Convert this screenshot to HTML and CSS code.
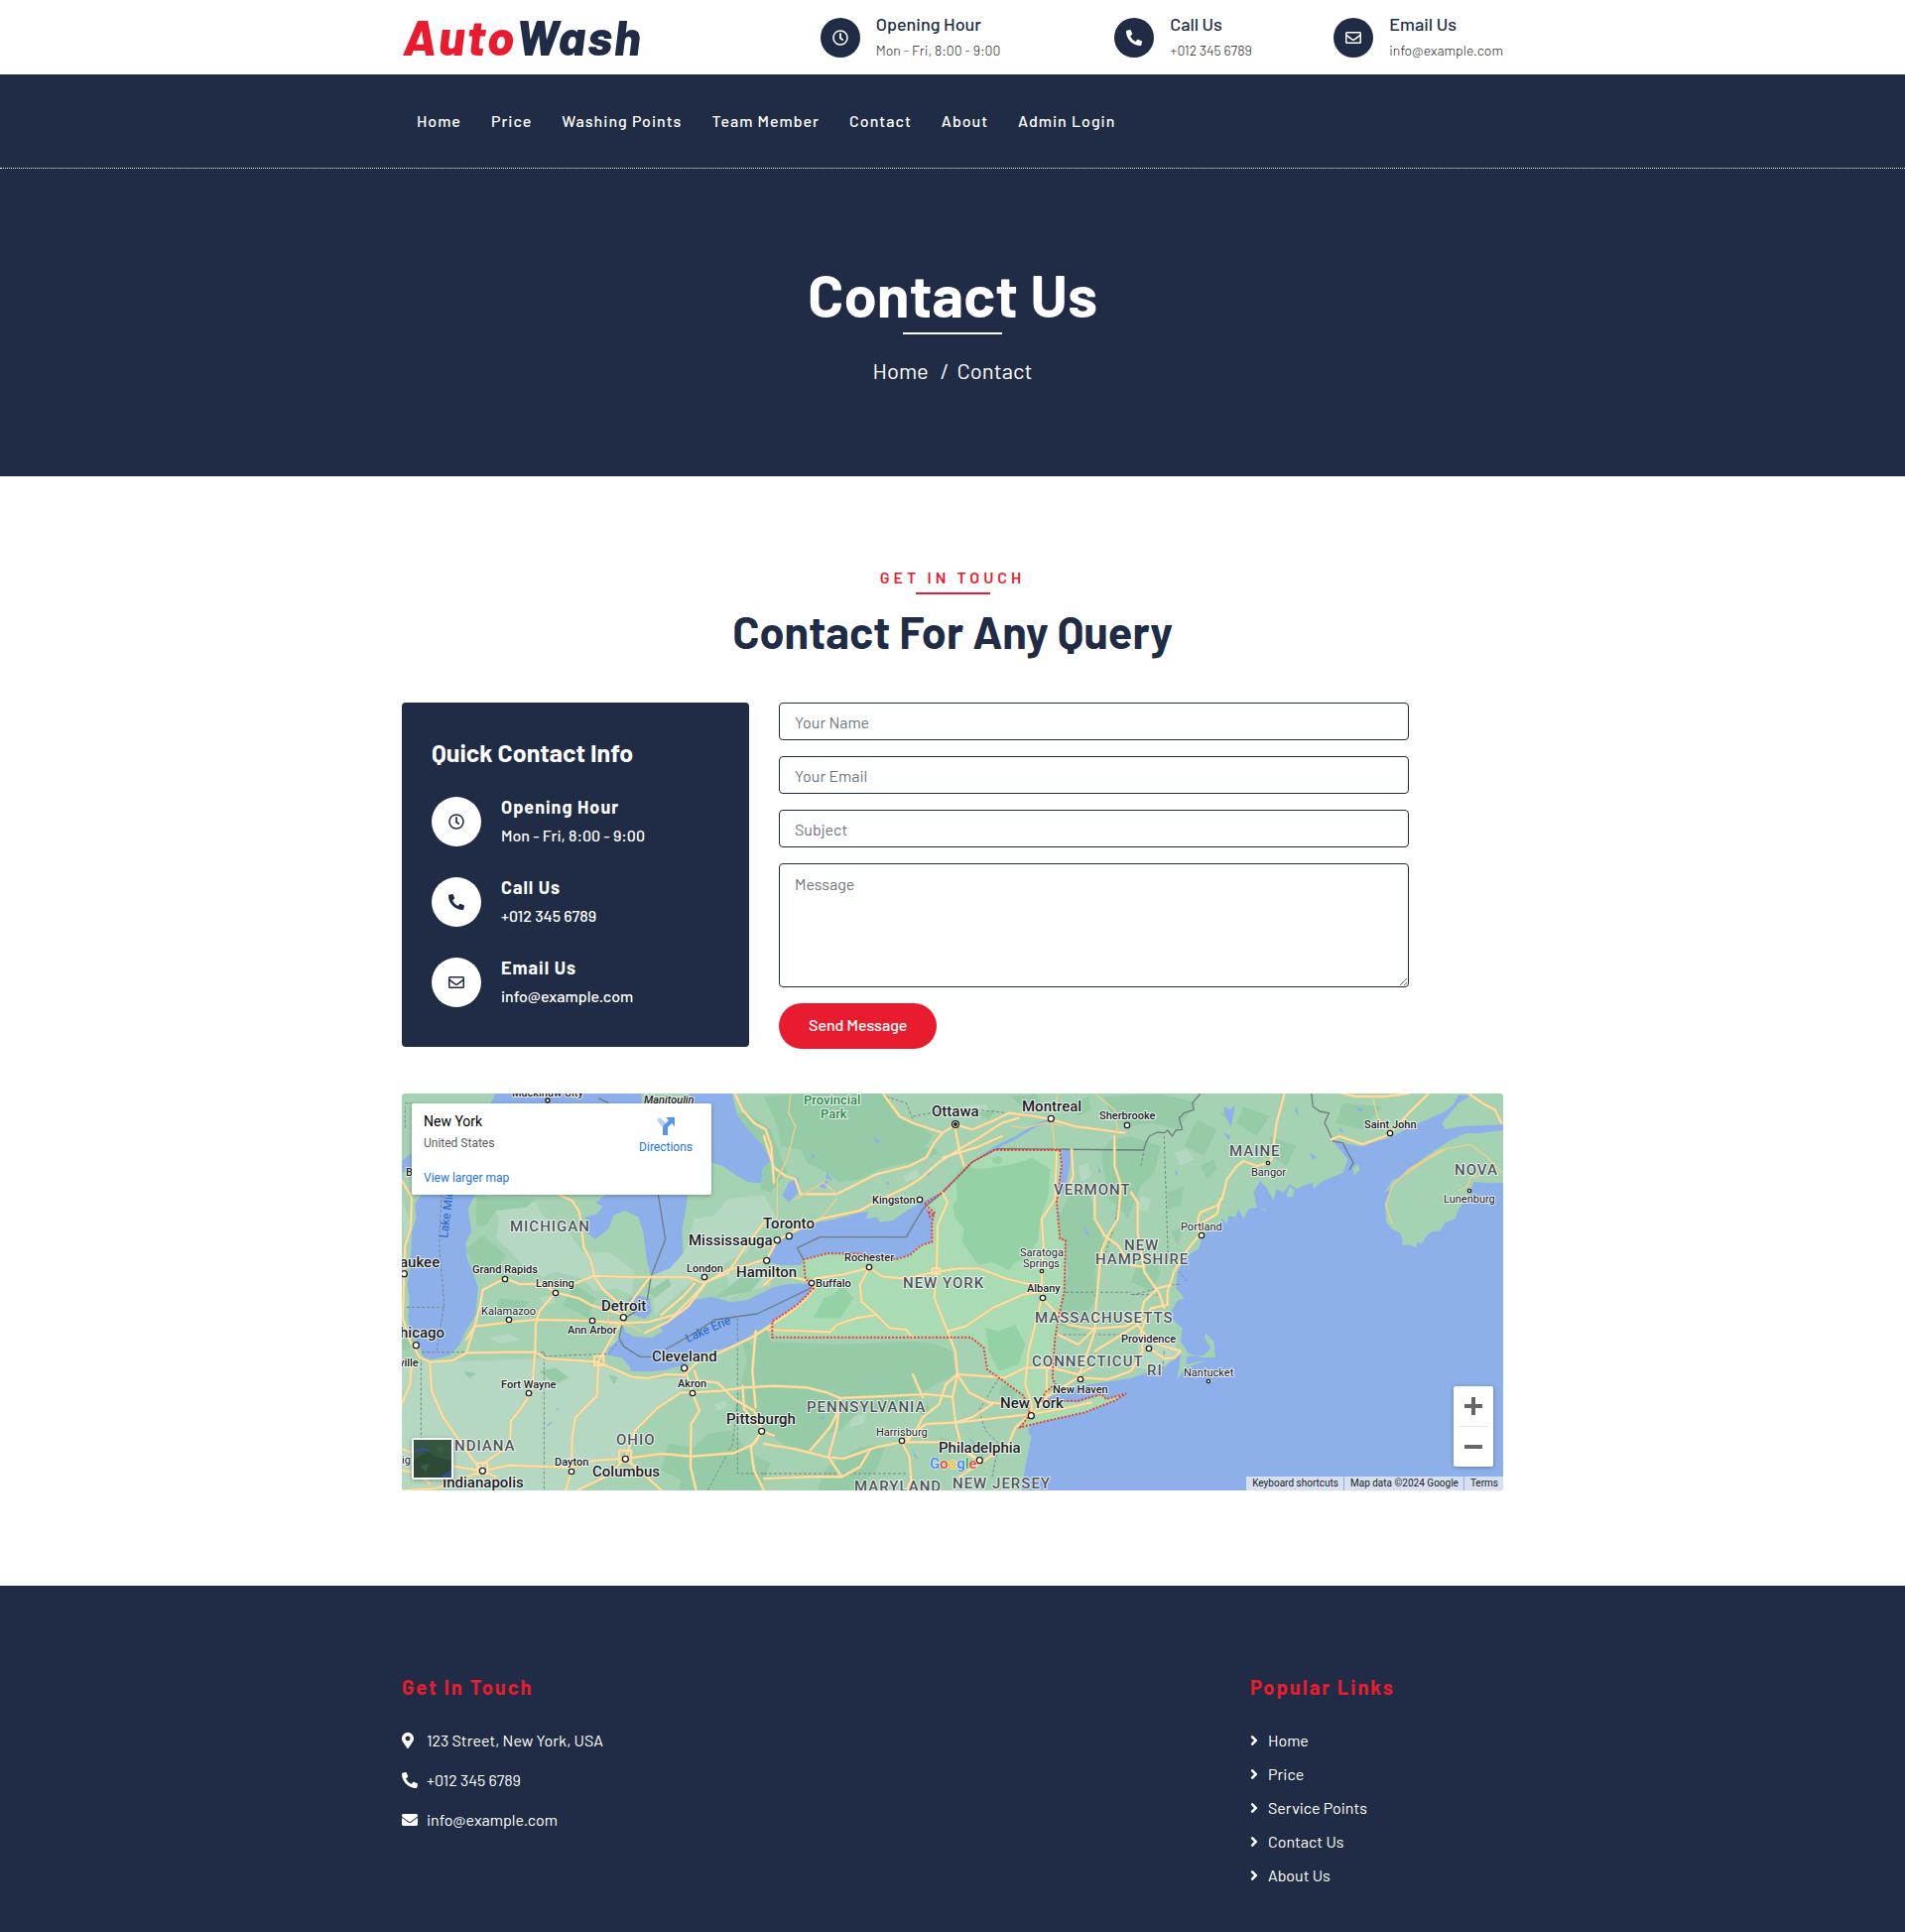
FILE: index.html
```html
<!DOCTYPE html>
<html lang="en">
<head>
<meta charset="utf-8">
<meta name="viewport" content="width=device-width, initial-scale=1">
<title>AutoWash - Contact Us</title>
<link rel="stylesheet" href="styles.css">
</head>
<body>
<svg class="sprite" aria-hidden="true">
  <symbol id="i-clock" viewBox="0 0 512 512"><path d="M256 8C119 8 8 119 8 256s111 248 248 248 248-111 248-248S393 8 256 8zm0 448c-110.500 0-200-89.500-200-200S145.500 56 256 56s200 89.500 200 200-89.500 200-200 200zm61.800-104.400l-84.900-61.700c-3.100-2.300-4.900-5.900-4.900-9.700V116c0-6.600 5.400-12 12-12h32c6.600 0 12 5.400 12 12v141.700l66.800 48.600c5.400 3.900 6.500 11.400 2.600 16.800L334.600 349c-3.900 5.300-11.400 6.500-16.800 2.600z"/></symbol>
  <symbol id="i-phone" viewBox="0 0 512 512"><path d="M497.390 361.800l-112-48a24 24 0 0 0-28 6.900l-49.600 60.600A370.660 370.660 0 0 1 130.600 204.110l60.600-49.600a23.940 23.940 0 0 0 6.900-28l-48-112A24.160 24.160 0 0 0 122.600.610l-104 24A24 24 0 0 0 0 48c0 256.500 207.900 464 464 464a24 24 0 0 0 23.400-18.600l24-104a24.290 24.290 0 0 0-14.010-27.600z"/></symbol>
  <symbol id="i-mail" viewBox="0 0 512 512"><path d="M464 64H48C21.490 64 0 85.490 0 112v288c0 26.510 21.490 48 48 48h416c26.510 0 48-21.490 48-48V112c0-26.510-21.490-48-48-48zm0 48v40.805c-22.422 18.259-58.168 46.651-134.587 106.490-16.841 13.247-50.201 45.072-73.413 44.701-23.208.375-56.579-31.459-73.413-44.701C106.180 199.465 70.425 171.067 48 152.805V112h416zM48 400V214.398c22.914 18.251 55.409 43.862 104.938 82.646 21.857 17.205 60.134 55.186 103.062 54.955 42.717.231 80.509-37.199 103.053-54.947 49.528-38.783 82.032-64.401 104.947-82.653V400H48z"/></symbol>
  <symbol id="i-mail-solid" viewBox="0 0 512 512"><path d="M502.300 190.800c3.900-3.100 9.700-.200 9.700 4.700V400c0 26.500-21.500 48-48 48H48c-26.500 0-48-21.500-48-48V195.600c0-5 5.700-7.800 9.700-4.700 22.400 17.400 52.100 39.500 154.100 113.600 21.100 15.400 56.700 47.800 92.200 47.600 35.700.300 72-32.800 92.300-47.600 102-74.100 131.600-96.300 154-113.700zM256 320c23.200.400 56.600-29.200 73.400-41.400 132.700-96.300 142.800-104.700 173.400-128.700 5.800-4.500 9.200-11.500 9.200-18.900v-19c0-26.500-21.500-48-48-48H48c-26.500 0-48 21.500-48 48v19c0 7.400 3.400 14.300 9.200 18.900 30.600 23.900 40.700 32.400 173.400 128.700 16.800 12.200 50.200 41.800 73.400 41.400z"/></symbol>
  <symbol id="i-pin" viewBox="0 0 384 512"><path d="M172.268 501.670C26.970 291.031 0 269.413 0 192 0 85.961 85.961 0 192 0s192 85.961 192 192c0 77.413-26.970 99.031-172.268 309.670-9.535 13.774-29.930 13.773-39.464 0zM192 272c44.183 0 80-35.817 80-80s-35.817-80-80-80-80 35.817-80 80 35.817 80 80 80z"/></symbol>
  <symbol id="i-angle" viewBox="0 0 256 512"><path d="M224.300 273l-136 136c-9.400 9.400-24.600 9.400-33.900 0l-22.600-22.600c-9.400-9.400-9.400-24.600 0-33.900l96.400-96.400-96.400-96.400c-9.400-9.400-9.400-24.600 0-33.900L54.300 103c9.400-9.400 24.600-9.400 33.900 0l136 136c9.500 9.400 9.500 24.600.100 34z"/></symbol>
</svg>

<header class="topbar">
  <div class="container topbar-row">
    <a class="logo" href="#"><span class="logo-accent">Auto</span><span>Wash</span></a>
    <div class="topbar-items">
      <div class="topbar-item">
        <span class="badge"><svg><use href="#i-clock"/></svg></span>
        <div><h3>Opening Hour</h3><p>Mon - Fri, 8:00 - 9:00</p></div>
      </div>
      <div class="topbar-item">
        <span class="badge"><svg><use href="#i-phone"/></svg></span>
        <div><h3>Call Us</h3><p>+012 345 6789</p></div>
      </div>
      <div class="topbar-item">
        <span class="badge"><svg><use href="#i-mail"/></svg></span>
        <div><h3>Email Us</h3><p>info@example.com</p></div>
      </div>
    </div>
  </div>
</header>

<nav class="navbar" aria-label="Main">
  <div class="container nav-row">
    <a href="#">Home</a><a href="#">Price</a><a href="#">Washing Points</a><a href="#">Team Member</a><a href="#">Contact</a><a href="#">About</a><a href="#">Admin Login</a>
  </div>
</nav>

<section class="hero">
  <h1>Contact Us</h1>
  <div class="crumbs"><a href="#">Home</a><span>/</span><a href="#">Contact</a></div>
</section>

<main class="container contact">
  <div class="section-head">
    <p>Get In Touch</p>
    <h2>Contact For Any Query</h2>
  </div>
  <div class="contact-row">
    <aside class="info">
      <h2>Quick Contact Info</h2>
      <div class="info-item">
        <span class="badge"><svg><use href="#i-clock"/></svg></span>
        <div><h3>Opening Hour</h3><p>Mon - Fri, 8:00 - 9:00</p></div>
      </div>
      <div class="info-item">
        <span class="badge"><svg><use href="#i-phone"/></svg></span>
        <div><h3>Call Us</h3><p>+012 345 6789</p></div>
      </div>
      <div class="info-item">
        <span class="badge"><svg><use href="#i-mail"/></svg></span>
        <div><h3>Email Us</h3><p>info@example.com</p></div>
      </div>
    </aside>
    <form class="form">
      <input type="text" placeholder="Your Name" aria-label="Your Name">
      <input type="email" placeholder="Your Email" aria-label="Your Email">
      <input type="text" placeholder="Subject" aria-label="Subject">
      <textarea placeholder="Message" aria-label="Message"></textarea>
      <button type="button">Send Message</button>
    </form>
  </div>

  <div class="map">
    <svg class="map-art" viewBox="0 0 1110 400" preserveAspectRatio="xMidYMid slice" role="img" aria-label="Map of New York">
      <defs>
        <g id="roads">
          <path d="M1022 21L1045 70L1080 110L1115 130L1132 180L1140 290"/>
          <path d="M490 327L530 345L552 380L560 440L565 485L588 530L597 575L625 615L660 645L690 680"/>
          <path d="M15 285L45 335L42 430L25 480L22 560L18 700L40 770L70 820L100 833L170 828L210 805L330 803L420 803L450 822L600 832L660 855L710 878L760 882L815 870L870 872L905 835L975 805L1080 755L1140 715L1180 690L1240 640L1265 605"/>
          <path d="M210 805L235 725L340 712L420 705L590 708L675 715L760 712L840 690L900 630L935 590L1000 565L1050 490L1110 410"/>
          <path d="M210 765L235 725L250 670L260 615L327 580L370 597L440 597L480 622L550 640L590 662L685 690L720 635L762 580"/>
          <path d="M440 597L540 595L595 572L700 576L880 576L930 595L1000 555L1060 540L1120 520L1150 465L1185 445L1280 400L1400 375L1440 352L1540 305L1580 280L1640 228L1700 190L1760 155L1830 110L1880 95"/>
          <path d="M750 745L820 710L880 665L930 600M800 690L870 630L900 595"/>
          <path d="M480 622L430 680L420 720L418 800L410 900L400 935L370 980L345 1010L342 1085L260 1140L259 1162L150 1145L15 1095"/>
          <path d="M100 835L105 920L140 1000L175 1050L235 1135L259 1162L300 1180M15 960L40 900L45 830M15 1221L120 1215L259 1162L340 1145L528 1152L600 1130L690 1125L800 1110L890 1118L1020 1108L1080 1080L1105 1042L1140 1055"/>
          <path d="M685 700L650 760L610 830L605 935L540 1000L530 1060L528 1165L510 1221"/>
          <path d="M690 1125L720 1040L790 970L860 925L893 925L870 850M690 1125L740 1165L800 1221M690 1125L640 1175L545 1221"/>
          <path d="M893 925L915 980L890 1020L888 1150L905 1221M893 925L980 920L1050 910L1140 905L1240 910L1300 925L1340 942L1430 938L1500 935L1600 930L1680 938"/>
          <path d="M900 860L910 890L970 895L1020 945L1080 980L1105 1042L1070 1090L1080 1160L1110 1221M1085 740L1075 860L1085 970M1045 905L1050 975L1090 1020"/>
          <path d="M1110 1080L1200 1095L1300 1120L1350 1125L1450 1090L1527 1075L1600 1020L1700 1015L1830 1000L1918 990"/>
          <path d="M1340 942L1330 1030L1305 1120L1345 1180L1400 1150L1430 1100M1110 1185L1250 1180L1345 1180M1527 1075L1550 1120L1555 1190L1540 1221M1527 1075L1680 1075L1762 1130"/>
          <path d="M1110 600L1150 565L1253 590L1265 580L1350 568L1428 548L1470 575L1540 580L1630 560L1700 550L1760 550L1840 580L1900 595L1950 600"/>
          <path d="M1428 548L1400 600L1405 650L1450 690L1490 730L1540 735L1560 758M1120 735L1200 738L1310 742L1330 720L1390 700L1450 690"/>
          <path d="M1650 320L1665 350L1635 420L1632 560L1625 640L1665 740L1688 800L1695 870L1680 940L1690 1020L1710 1100L1760 1130"/>
          <path d="M1665 740L1720 725L1800 670L1890 630L1950 620"/>
          <path d="M1695 870L1660 900L1640 960L1590 1000L1570 1040L1540 1075M1695 870L1730 925L1790 955L1850 960M1695 870L1840 880L1900 850L1980 850L2060 870L2100 850"/>
          <path d="M1995 200L1990 340L1950 400L1955 480L1950 560L1950 640L1930 720L1910 800L1900 900L1920 960L1918 990L1870 1030L1850 1080L1770 1135L1700 1180"/>
          <path d="M1950 640L1990 680L2030 720L2100 732L2200 725L2255 700M1965 850L1965 940L1920 990L2010 975L2100 955"/>
          <path d="M1470 21L1520 90L1560 110L1650 140L1689 115L1740 130L1800 105L1850 80L1930 90L1980 100L2050 120L2160 135L2200 140"/>
          <path d="M1689 130L1700 190L1715 240M1550 240L1450 265L1380 300L1330 325L1220 325L1205 280L1175 270L1140 245L1110 150M1550 240L1600 215L1625 170L1650 140M1650 215L1750 185L1830 150"/>
          <path d="M2040 190L2045 270L2025 320M2170 150L2170 240L2190 300L2180 400L2150 450L2130 500L2115 650L2110 740L2090 800L2060 880M2110 300L2110 400L2140 450L2180 480L2220 540"/>
          <path d="M2220 320L2240 350L2240 440L2260 560L2305 625L2320 670M2220 540L2260 545"/>
          <path d="M2684 21L2660 110L2645 220L2634 231L2600 240L2560 225L2540 240L2510 280L2495 340L2480 360L2430 380L2422 400L2425 450M2490 340L2480 385L2430 415M2425 450L2385 500L2350 560L2330 620L2330 660L2280 670L2250 740L2255 800L2220 860L2150 885L2060 880L1960 940"/>
          <path d="M2340 600L2300 610L2260 650L2240 720L2270 760L2300 780L2370 800L2350 820L2320 822L2275 790M2110 800L2200 745L2240 720"/>
          <path d="M2825 160L2850 150L2920 175L3000 145L3060 80L3120 21M2860 21L2900 30L2990 30L3060 21M3240 21L3290 55L3320 70L3340 110"/>
          <path d="M2000 750L2060 780L2110 732M1800 960L1740 1000L1690 1015M1590 940L1560 870M1250 1100L1310 1030L1330 990M15 1160L60 1170L100 1200"/>
          <rect x="597" y="815" width="28" height="28"/><rect x="672" y="1100" width="36" height="36"/>
          <rect x="244" y="1138" width="30" height="34"/><rect x="1618" y="550" width="24" height="16"/>
        </g>
        <path id="minor" d="M1190 21L1185 80L1205 120L1180 220L1150 280L1150 400M1110 490L1150 465M1280 400L1330 340M2000 21L1980 100L1990 190M2110 21L2170 70L2180 140M2950 30L2965 90L3000 145M3010 415L2990 360L3010 300L3060 250L3160 190L3245 175L3300 215L3340 260M3050 265L3100 230L3170 190M3210 315L3240 300L3245 275L3280 268M1860 120L1900 125L1960 110L2010 118M1205 340L1290 290L1330 325M740 740L700 720L640 720V690"/>
      </defs>
      <rect class="land" width="1110" height="400"/>
      <g transform="scale(.33333) translate(-15 -21)">
        <g class="land-light">
          <path d="M75 835L450 822L600 840L760 885L870 880L860 925L740 1010L720 1040L680 1120L560 1221H15V850ZM270 327L330 335L420 350L440 390L520 440L560 500L640 500L720 560L710 630L660 610L600 620L560 580L480 560L440 575L380 540L345 500L300 460L310 400ZM900 400L960 390L1000 340L1110 330L1150 400L1090 440L1060 500L1000 530L950 560L880 600L780 690L770 580L870 500Z"/>
          <path d="M15 340L45 420L20 470ZM1000 560L1110 530L1130 600L1000 640ZM2240 750L2350 760L2360 810L2300 860L2240 850Z"/>
          <path d="M1400 60l50-10 30 20-20 30-50-5zM1530 270l40-20 10 20-40 20zM1700 60l80-8 10 20-70 10zM1220 820l50-20 20 20-50 30zM1490 620l40-14 10 30-30 20zM1860 620l30-10 10 30-30 10zM2060 240l30-10 10 40-30 20zM2250 330l30 10-10 40-30-10zM2350 200l40-10 20 30-40 20zM1370 1000l50-10-10 30-40 10zM960 960l30-10 10 20-30 10zM1150 940l60-10 10 20-60 20zM430 640l40-10 10 20-30 14zM280 760l60-14 30 20-60 10zM640 780l20-20 6 30zM1950 900l30-30 10 40z"/>
        </g>
        <g class="land-dark">
          <path d="M1110 30L1240 21L1470 21L1490 60L1520 100L1580 110L1620 150L1600 180L1590 220L1520 235L1460 250L1400 280L1340 290L1300 260L1240 230L1220 190L1160 180L1150 120Z"/>
          <path d="M1110 700L1130 770L1340 780L1540 770L1620 775L1680 800L1690 870L1630 900L1560 940L1460 980L1410 970L1340 1040L1290 1050L1250 1110L1180 1090L1110 1040L1060 1000L1020 980L1040 900L1060 820Z"/>
          <path d="M2000 400L2030 330L2080 310L2100 340L2140 480L2110 560L2120 640L2080 690L2060 740L2000 720L2010 640L2030 560L2015 480ZM2130 200L2160 160L2220 150L2310 180L2290 260L2250 300L2210 400L2180 360L2150 340ZM2260 480L2310 560L2280 620L2220 590ZM1400 1090L1480 1080L1450 1160L1380 1221H1270L1300 1150ZM820 1080L900 1090L940 1050L1010 1040L1060 1100L1130 1140L1100 1221H850L860 1190L800 1160Z"/>
          <path d="M2140 30L2310 21L2420 50L2360 130L2280 110L2220 120L2160 100ZM2420 100L2480 130L2440 210L2380 180ZM2560 60L2640 90L2600 150L2540 110ZM2860 50L2980 60L2920 130L2840 110ZM210 490L260 450L330 510L300 560L230 545ZM310 640L400 650L370 690L300 680ZM540 600L600 640L580 700L500 660Z"/>
          <path d="M240 330L420 340L390 365L300 375L270 420L240 420ZM430 860L480 850L520 880L480 900ZM60 760L30 800L15 790V720ZM1010 80L1110 220L1100 310L1130 320L1180 260L1130 130L1060 80ZM960 640L1060 560L1110 570L1070 620ZM2640 150L2720 180L2690 240L2640 210Z"/>
          <path d="M1560 200l60-20 20 20-60 30zM1750 80l60-10-20 30zM1860 30l70-6 20 20-60 20zM2040 50l50-20 10 40-40 20zM640 870l30 10-14 20zM200 860l40 6-20 16zM760 620l60-40 10 20-50 40zM2430 240l40-20 10 30-30 30zM2490 80l30-10 0 40zM2590 200l20-20 10 30zM2330 320l50-20-10 60-40 10zM2340 440l40-20-20 60zM1830 900l50 10-20 40-40-20zM1640 1060l50 10-20 40zM1570 980l40-20 0 40zM1040 760l50 30-30 40z"/>
        </g>
        <g class="lake-specks"><path d="M2500 60l20 10 14-14-4 26-8 40-14-26zM2500 140l22 10-8 12zM2720 60l8 36-12-24zM2760 200l22 14-14 8zM2600 180l12 20-10 4zM1270 300l36-18-10 26zM1300 260l18 24-22-8zM1600 262l22-14-14 22zM1490 640l6 60-6-24zM1520 620l8 40-8-12zM1545 680l14 20-8 2zM1640 525l40 10 0 10-40-2zM1730 1060l40 44-24-14zM450 1025l24-16-14 16zM1560 1100l18 28-12-8zM2080 420l14 34-12-10zM1440 150l24 16-14 6zM1250 200l16 10-8 10zM3125 345l14-12 8 14-14 10zM1180 300l10-14 14 20-8 30-16-4zM1280 1000l16-6-10 14zM2120 240l10 20-8 2zM2355 250l8 20-10-4zM2850 120l14 20-12-4zM2900 60l24 10-16 8zM1480 285l10 8-8 6zM480 975l12-4-6 8z"/></g>
        <g class="water">
          <path d="M78 320L55 355L58 400L45 440L42 520L32 600L38 640L34 700L40 740L72 790L78 815L105 826L160 812L190 780L210 735L238 690L245 610L230 560L213 520L208 470L226 440L215 370L240 320Z"/>
          <path d="M640 320L600 352L622 362L605 385L570 395L572 440L600 462L640 430L655 390L690 374L730 395L745 440L755 520L768 572L825 550L865 505L862 430L872 380L880 320Z"/>
          <path d="M300 15H740V60H280ZM880 15H1012L1030 90L1080 150L1108 180L1130 225L1105 250L1102 292L1060 288L1020 265L985 240L940 225ZM15 225L45 200V250L15 260Z"/>
          <path d="M700 642L725 630L765 640L770 680L750 702L715 690ZM680 712L675 760L640 792L635 812L680 820L706 850L705 860L760 862L810 858L870 840L900 825L950 800L1030 782L1080 745L1140 710L1230 655L1258 615L1250 595L1180 598L1140 606L1060 645L1010 652L950 636L900 645L850 680L790 722L805 740L770 760L715 755L690 740Z"/>
          <path d="M1115 528L1155 460L1190 445L1250 412L1310 405L1400 380L1425 378L1420 400L1450 395L1460 410L1500 405L1550 370L1590 350L1650 316L1600 365L1625 385L1618 410L1618 470L1580 480L1550 510L1510 522L1390 505L1300 505L1230 523L1220 540L1160 540Z"/>
          <path d="M2010 195L2038 190L2035 240L2025 290L2012 330L2000 300L2008 240ZM1185 290L1215 275L1215 320L1185 350L1165 330Z"/>
          <path d="M1888 1221L1900 1150L1918 1060L1908 1040L1925 1010L1960 980L1960 945L2010 925L2070 905L2150 892L2220 882L2280 860L2310 866L2330 840L2370 810L2365 850L2358 885L2386 850L2440 830L2470 820L2468 790L2440 750L2465 755L2475 800L2470 822L2386 840L2390 800L2370 770L2375 730L2345 705L2335 690L2360 648L2382 640L2355 610L2360 560L2385 515L2425 490L2435 455L2470 420L2485 425L2495 400L2510 415L2515 390L2535 395L2545 370L2560 400L2575 370L2600 365L2595 340L2590 320L2610 285L2630 305L2650 345L2660 310L2680 320L2700 295L2720 310L2740 300L2770 290L2770 310L2800 285L2860 262L2875 220L2830 165L2910 180L3000 155L3070 120L3170 75L3195 55L3210 25L3245 28L3210 50L3160 110L3170 130L3220 120L3345 115V1221Z"/>
        </g>
        <path class="river" d="M1650 318L1750 225L1810 185L1870 155L1930 118L1990 95M1945 520L1990 450L2000 380M1925 780L1912 900"/>
        <path class="land-fill" d="M3235 140L3270 142L3345 132V292L3300 292L3255 288L3245 330L3210 370L3200 400L3170 410L3155 435L3125 440L3110 455L3100 475L3085 470L3083 487L3060 478L3040 480L3040 455L3030 440L3010 432L2992 410L2988 350L3010 300L3060 250L3120 205L3180 165ZM2370 800L2440 820L2475 818L2470 770L2445 745L2442 760L2462 790L2440 812L2390 815L2360 880L2385 850ZM2890 250L2905 235L2912 250L2895 268ZM2620 365l8 10-6 2zM2455 885l14 4-6 6zM2690 325l10-22 14 10-6 20-14 2zM2985 320l30-40 20-6-36 40z"/>
        <path class="ny" d="M1650 320L1740 228L1805 192L2005 192L2010 240L1995 350L2005 460L2022 465L2018 620L2000 700L1990 760L1980 880L1990 900L1960 925L1950 950L2060 955L2130 930L2145 945L2200 930L2170 950L2080 985L1960 1012L1890 1030L1915 990L1895 935L1820 880L1785 855L1775 790L1735 758L1135 758V710L1210 660L1260 610L1255 590L1230 560L1230 523L1300 505L1390 505L1510 522L1550 510L1585 480L1618 470L1618 410L1625 385L1600 365Z"/>
        <path class="ny-dark" d="M1690 260L1720 240L1760 250L1830 240L1880 230L1920 215L1975 250L1970 330L1945 400L1940 460L1910 520L1870 530L1850 555L1800 530L1760 540L1730 500L1710 470L1715 430L1690 400L1680 360L1695 340ZM1780 730L1820 740L1870 720L1900 780L1880 840L1820 860L1790 800ZM1290 640L1320 630L1350 600L1380 640L1340 700L1260 700ZM1800 215l20-5 14 12-12 12-20-4z"/>
        <path class="country" d="M610 35L640 50M790 327L812 462L768 575L757 645M685 700L672 760L685 785L735 817L770 817M812 795L900 745L960 705L1090 687L1254 608M1210 488L1280 455L1540 455L1590 370L1650 320L1740 228L1815 188L2258 192L2265 170L2275 150L2300 138L2320 140L2330 132L2345 150L2355 132L2375 130L2365 95L2380 80L2410 70L2405 50L2430 21M2765 21L2770 60L2790 75L2818 80L2805 110L2815 130L2830 165L2860 170L2875 200L2892 230L2880 252M1230 523L1210 488M722 680L690 700"/>
        <path class="state" d="M135 327L128 480L143 660L120 800M15 667H143M75 803H445M445 815L640 808L672 770M445 803V1221M73 820V1140M1030 700V1170H1110M1110 1170H1540M1030 960L1015 1080L940 1221M1480 30L1540 50L1560 100M1560 90L1700 65L1850 80M2022 622H2220M2000 750H2200M2220 628L2300 630M2320 150L2332 520L2390 590M2250 240L2260 190M2185 320L2170 420L2125 560L2110 640M1820 880L1760 980L1780 1040L1820 1080L1800 1180M2225 630L2340 600L2365 598M25 50H45M25 125V60M2320 800L2315 860"/>
        <use class="road-edge" href="#roads"/>
        <use class="road-core" href="#roads"/>
        <use class="road-minor" href="#minor"/>
        <path class="outline" d="M2005 192L2010 240L1995 350L2005 460L2022 465L2018 620L2000 700L1990 760L1982 880L1990 900L1960 925L1950 950L2060 950L2130 930L2145 945L2205 928L2170 950L2080 985L1960 1012L1885 1030L1915 990L1895 935L1820 880L1785 855L1775 790L1735 758L1135 758V710L1210 660L1260 610L1235 580L1230 523L1300 505L1390 505L1510 522L1550 510L1585 480L1618 470L1618 410L1625 380L1595 355L1650 320L1740 228L1805 192ZM1608 380l18 6-14 8z"/>
        <g class="dots">
          <circle cx="456" cy="42" r="6"/><circle cx="22" cy="566" r="9"/><circle cx="327" cy="582" r="8"/><circle cx="480" cy="624" r="8"/><circle cx="339" cy="705" r="8"/><circle cx="591" cy="708" r="8"/><circle cx="685" cy="698" r="9"/><circle cx="58" cy="782" r="9"/><circle cx="930" cy="576" r="8"/><circle cx="1118" cy="526" r="9"/><circle cx="1150" cy="464" r="9"/><circle cx="1186" cy="452" r="9"/><circle cx="869" cy="851" r="9"/><circle cx="894" cy="927" r="8"/><circle cx="399" cy="927" r="8"/><circle cx="1103" cy="1042" r="9"/><circle cx="691" cy="1126" r="9"/><circle cx="528" cy="1164" r="8"/><circle cx="259" cy="1162" r="9"/><circle cx="1689" cy="114" r="10"/><circle cx="1978" cy="97" r="9"/><circle cx="2208" cy="117" r="8"/><circle cx="1581" cy="342" r="8"/><circle cx="1428" cy="546" r="8"/><circle cx="1254" cy="594" r="8"/><circle cx="1950" cy="558" r="5"/><circle cx="1953" cy="639" r="8"/><circle cx="2067" cy="885" r="8"/><circle cx="1918" cy="995" r="9"/><circle cx="1527" cy="1071" r="8"/><circle cx="1762" cy="1130" r="9"/><circle cx="2634" cy="231" r="5"/><circle cx="2433" cy="450" r="8"/><circle cx="3003" cy="141" r="8"/><circle cx="3243" cy="315" r="5"/><circle cx="2274" cy="792" r="8"/><circle cx="2454" cy="891" r="5"/>
          <circle class="dot-core" cx="1689" cy="114" r="4"/>
        </g>
      </g>
      <g class="label town">
        <text x="111" y="3">Mackinaw City</text><text x="244" y="10" font-style="italic">Manitoulin</text><text x="4" y="83">B</text>
        <text x="71" y="181">Grand Rapids</text><text x="135" y="195">Lansing</text><text class="thin" x="80" y="223">Kalamazoo</text><text x="167" y="242">Ann Arbor</text><text x="-3" y="275">ville</text><text x="287" y="180">London</text><text x="100" y="297">Fort Wayne</text><text x="278" y="296">Akron</text><text x="154" y="375">Dayton</text><text class="thin" x="0" y="373">ig</text>
        <text x="703" y="26">Sherbrooke</text><text x="474" y="111">Kingston</text><text x="446" y="169">Rochester</text><text x="417" y="195">Buffalo</text><text class="thin" x="623" y="164">Saratoga</text><text class="thin" x="626" y="175">Springs</text><text x="630" y="200">Albany</text><text x="725" y="251">Providence</text><text x="656" y="302">New Haven</text><text class="thin" x="478" y="345">Harrisburg</text><text class="thin" x="856" y="83">Bangor</text><text class="thin" x="785" y="138">Portland</text><text x="970" y="35">Saint John</text><text class="thin" x="1050" y="110">Lunenburg</text><text class="thin" x="788" y="285">Nantucket</text>
      </g>
      <g class="label city">
        <text x="-2" y="175">aukee</text><text x="201" y="219">Detroit</text><text x="-2" y="246">hicago</text><text x="337" y="185">Hamilton</text><text x="289" y="153">Mississauga</text><text x="364" y="136">Toronto</text><text x="252" y="270">Cleveland</text><text x="327" y="333">Pittsburgh</text><text x="192" y="386">Columbus</text><text x="41" y="397">Indianapolis</text><text x="534" y="23">Ottawa</text><text x="625" y="18">Montreal</text><text x="603" y="317">New York</text><text x="541" y="362">Philadelphia</text>
      </g>
      <g class="label region">
        <text x="109" y="139">MICHIGAN</text><text x="216" y="354">OHIO</text><text x="53" y="360">NDIANA</text><text x="505" y="196">NEW YORK</text><text x="657" y="102">VERMONT</text><text x="728" y="158">NEW</text><text x="699" y="172">HAMPSHIRE</text><text x="638" y="231">MASSACHUSETTS</text><text x="635" y="275">CONNECTICUT</text><text x="408" y="321">PENNSYLVANIA</text><text x="456" y="401">MARYLAND</text><text x="555" y="398">NEW JERSEY</text><text x="834" y="63">MAINE</text><text x="1061" y="82">NOVA</text><text x="751" y="284">RI</text>
      </g>
      <g class="label park"><text x="405" y="11">Provincial</text><text x="422" y="25">Park</text></g>
      <g class="lake-name"><text transform="translate(46 146) rotate(-83)">Lake Michigan</text><text transform="translate(288 251) rotate(-24)">Lake Erie</text></g>
      <text class="brand" x="532" y="378"><tspan fill="#4285f4">G</tspan><tspan fill="#ea4335">o</tspan><tspan fill="#fbbc04">o</tspan><tspan fill="#4285f4">g</tspan><tspan fill="#34a853">l</tspan><tspan fill="#ea4335">e</tspan></text>
    </svg>
    <div class="map-card">
      <div class="map-place"><strong>New York</strong><span>United States</span><a href="#">View larger map</a></div>
      <a class="map-directions" href="#">
        <svg viewBox="0 0 18 18" aria-hidden="true"><path fill="#b3d1f7" d="M0 3L3 0L9 6V11H7Z"/><path fill="#5a96e6" d="M9 0H18V9L15 6L11 10V18H6V11Q6 8 8 7L12 3Z"/></svg>
        Directions
      </a>
    </div>
    <button class="map-thumb" type="button" aria-label="Show satellite imagery">
      <svg viewBox="0 0 38 38" aria-hidden="true"><path fill="#34553f" d="M0 0H38V38H0Z"/><path fill="#2c4a36" d="M0 20L14 12L20 16L38 22V38H0Z"/><path fill="#3f5c43" d="M22 4L32 8L26 16ZM6 26L16 24L12 32Z"/><path fill="#33508a" d="M1 10L8 8L14 9L16 12L8 11L2 14ZM28 36L34 33L38 30V38H30Z"/></svg>
    </button>
    <div class="map-zoom">
      <button type="button" aria-label="Zoom in"><svg viewBox="0 0 18 18"><path d="M0 7H7V0H11V7H18V11H11V18H7V11H0Z"/></svg></button>
      <button type="button" aria-label="Zoom out"><svg viewBox="0 0 18 18"><path d="M0 7H18V11H0Z"/></svg></button>
    </div>
    <div class="map-legal"><a href="#">Keyboard shortcuts</a><span>Map data ©2024 Google</span><a href="#">Terms</a></div>
  </div>
</main>

<footer class="footer">
  <div class="container footer-row">
    <div class="footer-contact">
      <h2>Get In Touch</h2>
      <p><svg class="pin"><use href="#i-pin"/></svg>123 Street, New York, USA</p>
      <p><svg><use href="#i-phone"/></svg>+012 345 6789</p>
      <p><svg><use href="#i-mail-solid"/></svg>info@example.com</p>
    </div>
    <div class="footer-links">
      <h2>Popular Links</h2>
      <a href="#"><svg><use href="#i-angle"/></svg>Home</a>
      <a href="#"><svg><use href="#i-angle"/></svg>Price</a>
      <a href="#"><svg><use href="#i-angle"/></svg>Service Points</a>
      <a href="#"><svg><use href="#i-angle"/></svg>Contact Us</a>
      <a href="#"><svg><use href="#i-angle"/></svg>About Us</a>
    </div>
  </div>
</footer>
</body>
</html>
```
FILE: styles.css
```css
:root {
  --navy: #202c45;
  --red: #e81c2e;
}

* { box-sizing: border-box; }

body {
  margin: 0;
  background: #fff;
  color: #666;
  font: 400 16px/24px Barlow, Roboto, sans-serif;
}

h1, h2, h3, p { margin: 0; }
a { color: inherit; text-decoration: none; }
button, input, textarea { font: inherit; }
.sprite { position: absolute; width: 0; height: 0; }

.container {
  width: 100%;
  max-width: 1140px;
  margin: 0 auto;
  padding: 0 15px;
}

.badge {
  display: flex;
  flex: none;
  align-items: center;
  justify-content: center;
  border-radius: 50%;
}
.badge svg { width: 16px; height: 16px; fill: currentColor; }

/* Top bar */
.topbar-row {
  display: grid;
  grid-template-columns: 350px 1fr;
  gap: 30px;
  align-items: center;
  min-height: 75px;
}
.logo {
  padding: 0 0 4px 1px;
  color: var(--navy);
  font-size: 50px;
  font-style: italic;
  font-weight: 800;
  line-height: 56px;
  letter-spacing: 2px;
}
.logo-accent { color: var(--red); }
.topbar-items {
  display: grid;
  grid-template-columns: repeat(3, 1fr);
  gap: 30px;
}
.topbar-item {
  display: flex;
  align-items: center;
  justify-content: flex-end;
  gap: 16px;
  white-space: nowrap;
}
.topbar-item .badge { width: 40px; height: 40px; background: var(--navy); color: #fff; }
.topbar-item h3 { color: var(--navy); font-size: 18px; font-weight: 500; line-height: 26px; }
.topbar-item p { font-size: 14px; font-weight: 300; line-height: 27px; color: #222; }

/* Navigation */
.navbar {
  background: var(--navy);
  border-bottom: 1px dotted #fff;
}
.nav-row {
  display: flex;
  flex-wrap: wrap;
  gap: 30px;
  padding: 35px 30px;
}
.nav-row a { color: #fff; font-weight: 500; letter-spacing: 1px; }

/* Page heading */
.hero {
  display: flex;
  flex-direction: column;
  align-items: center;
  gap: 21px;
  padding: 95px 15px 92px;
  background: var(--navy);
  color: #fff;
}
.hero h1 {
  display: flex;
  flex-direction: column;
  align-items: center;
  gap: 8px;
  font-size: 60px;
  font-weight: 700;
  line-height: 62px;
}
.hero h1::after { content: ""; width: 100px; height: 2px; background: #fff; }
.crumbs { display: flex; font-size: 22px; line-height: 30px; }
.crumbs span { padding: 0 8px 0 12px; }

/* Contact */
.contact { padding-top: 90px; padding-bottom: 96px; }
.section-head {
  display: flex;
  flex-direction: column;
  align-items: center;
  gap: 12px;
  margin-bottom: 47px;
}
.section-head p {
  display: flex;
  flex-direction: column;
  align-items: center;
  gap: 3px;
  color: var(--red);
  font-weight: 600;
  letter-spacing: 4px;
  text-transform: uppercase;
}
.section-head p::after { content: ""; width: 75px; height: 2px; background: var(--red); }
.section-head h2 { color: var(--navy); font-size: 45px; font-weight: 700; line-height: 50px; }

.contact-row {
  display: grid;
  grid-template-columns: 350px minmax(0, 635px);
  gap: 30px;
  align-items: start;
  margin-bottom: 45px;
}
.info {
  display: flex;
  flex-direction: column;
  gap: 24px;
  padding: 35px 30px 37px;
  border-radius: 4px;
  background: var(--navy);
  color: #fff;
}
.info h2 { margin-bottom: 2px; font-size: 25px; font-weight: 700; line-height: 30px; }
.info-item { display: flex; align-items: center; gap: 20px; }
.info-item .badge { width: 50px; height: 50px; background: #fff; color: var(--navy); }
.info-item h3 { font-size: 18px; font-weight: 700; line-height: 28px; letter-spacing: 1px; }
.info-item p { font-weight: 500; line-height: 29px; }

.form { display: flex; flex-direction: column; gap: 16px; align-items: flex-start; }
.form input, .form textarea {
  display: block;
  width: 100%;
  height: 38px;
  padding: 6px 15px;
  border: 1px solid var(--navy);
  border-radius: 4px;
  background: #fff;
  color: #495057;
}
.form textarea { height: 125px; padding-top: 8px; resize: vertical; }
.form ::placeholder { color: #6c757d; opacity: 1; }
.form button {
  min-height: 46px;
  padding: 0 30px 2px;
  border: 0;
  border-radius: 23px;
  background: var(--red);
  color: #fff;
  font-weight: 500;
}

/* Map */
.map {
  position: relative;
  overflow: hidden;
  height: 400px;
  border-radius: 4px;
  background: #8db0eb;
  font-family: Roboto, sans-serif;
}
.map-art { display: block; width: 100%; height: 100%; }
.land, .land-fill { fill: #a5d2b3; }
.land-light { fill: #b5d8c3; }
.land-dark { fill: #96cba8; }
.water, .lake-specks { fill: #8db0eb; }
.river { fill: none; stroke: #8db0eb; stroke-width: 9; }
.ny { fill: #a9dbb5; }
.ny-dark { fill: #94d2a5; }
.country { fill: none; stroke: #6f7c82; stroke-width: 4; stroke-linejoin: round; }
.state { fill: none; stroke: #77888a; stroke-width: 3; stroke-dasharray: 9 6; }
.road-edge, .road-core, .road-minor { fill: none; stroke-linejoin: round; stroke-linecap: round; }
.road-edge { stroke: #efc878; stroke-width: 9; }
.road-core { stroke: #f7e3b6; stroke-width: 5; }
.road-minor { stroke: #efcf8c; stroke-width: 4; }
.outline { fill: none; stroke: #ea4335; stroke-width: 6; stroke-dasharray: 6 5; }
.dots { fill: #fff; stroke: #222; stroke-width: 4; }
.dots .dot-core { fill: #222; }
.label { fill: #202124; stroke: #fff; stroke-opacity: .8; stroke-width: 2px; stroke-linejoin: round; paint-order: stroke; }
.town { font-size: 11px; font-weight: 500; }
.town .thin { font-weight: 400; }
.city { font-size: 15px; font-weight: 500; }
.region { fill: #50555b; font-size: 15px; font-weight: 500; letter-spacing: 1px; }
.park { fill: #2b8a4c; font-size: 13px; font-weight: 500; }
.lake-name { fill: #2467c4; font-size: 12px; }
.brand { font-size: 15px; font-weight: 500; stroke: #fff; stroke-width: 1px; paint-order: stroke; }

.map-card {
  position: absolute;
  top: 10px;
  left: 10px;
  display: flex;
  justify-content: space-between;
  width: 302px;
  height: 92px;
  padding: 9px 19px 9px 12px;
  border-radius: 2px;
  background: #fff;
  box-shadow: 0 1px 4px rgba(0, 0, 0, .3);
  font-size: 12px;
}
.map-place { display: flex; flex-direction: column; line-height: 16px; }
.map-place strong { margin-bottom: 5px; color: #000; font-size: 14px; font-weight: 400; line-height: 18px; }
.map-place span { margin-bottom: 19px; color: #5b5b5b; }
.map-card a { color: #1a73e8; }
.map-directions { display: flex; flex-direction: column; align-items: center; gap: 4px; padding-top: 5px; line-height: 16px; }
.map-directions svg { width: 18px; height: 18px; }

.map-thumb {
  position: absolute;
  bottom: 11px;
  left: 10px;
  width: 42px;
  height: 42px;
  padding: 0;
  border: 2px solid #fff;
  border-radius: 2px;
  box-shadow: 0 1px 4px rgba(0, 0, 0, .3);
}
.map-thumb svg { display: block; width: 38px; height: 38px; }

.map-zoom {
  position: absolute;
  right: 10px;
  bottom: 24px;
  width: 40px;
  padding: 0 5px;
  border-radius: 2px;
  background: #fff;
  box-shadow: 0 1px 4px rgba(0, 0, 0, .3);
}
.map-zoom button {
  display: flex;
  align-items: center;
  justify-content: center;
  width: 100%;
  height: 40px;
  padding: 0;
  border: 0;
  background: none;
}
.map-zoom button + button { height: 41px; border-top: 1px solid #e6e6e6; }
.map-zoom svg { width: 18px; height: 18px; fill: #666; }

.map-legal {
  position: absolute;
  right: 0;
  bottom: 0;
  display: flex;
  gap: 1px;
  color: #222;
  font-size: 10px;
  line-height: 14px;
}
.map-legal > * { padding: 0 5px 0 6px; background: rgba(245, 245, 245, .7); }

/* Footer */
.footer { padding: 90px 0 44px; background: var(--navy); color: #fff; }
.footer-row { display: grid; grid-template-columns: 1fr 255px; }
.footer h2 {
  margin-bottom: 30px;
  color: var(--red);
  font-size: 20px;
  font-weight: 700;
  line-height: 24px;
  letter-spacing: 2px;
}
.footer svg { flex: none; fill: currentColor; }
.footer-contact p { display: flex; align-items: center; gap: 9px; margin-bottom: 16px; }
.footer-contact svg { width: 16px; height: 16px; }
.footer-contact .pin { width: 12px; margin-right: 4px; }
.footer-links a { display: flex; align-items: center; gap: 10px; margin-bottom: 10px; }
.footer-links svg { width: 8px; height: 16px; }
```
